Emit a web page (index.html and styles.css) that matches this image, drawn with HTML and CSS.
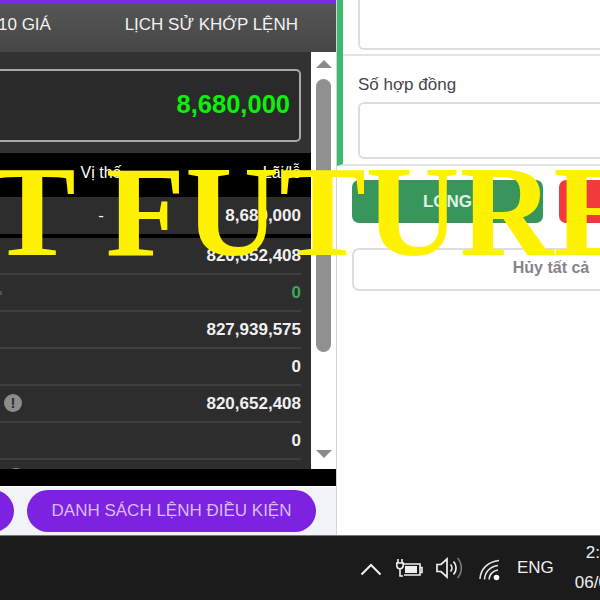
FILE: index.html
```html
<!DOCTYPE html>
<html lang="vi">
<head>
    <meta charset="UTF-8">
    <title>Future</title>
    <link rel="stylesheet" href="styles.css">
</head>
<body>
    <div class="screen">
        <div class="app">
            <!-- Bảng bên trái -->
            <div class="left-panel">
                <div class="tabs">
                    <span class="tab-cut">10 GIÁ</span>
                    <span>LỊCH SỬ KHỚP LỆNH</span>
                </div>

                <div class="table-area">
                    <div class="table-content">
                        <div class="balance-wrap">
                            <div class="balance-box">8,680,000</div>
                        </div>
                        <div class="row row-head"><span class="cell-mid">Vị thế</span><span class="cell-end">Lãi/lỗ</span></div>
                        <div class="row row-first"><span class="cell-mid">-</span><span class="cell-end">8,680,000</span></div>
                        <div class="row"><span class="cell-mid"></span><span class="cell-end">820,652,408</span></div>
                        <div class="row"><span class="cell-mid"><i class="dot"></i></span><span class="cell-end value-green">0</span></div>
                        <div class="row"><span class="cell-mid"></span><span class="cell-end">827,939,575</span></div>
                        <div class="row"><span class="cell-mid"></span><span class="cell-end">0</span></div>
                        <div class="row"><span class="cell-mid"><i class="info">!</i></span><span class="cell-end">820,652,408</span></div>
                        <div class="row"><span class="cell-mid"></span><span class="cell-end">0</span></div>
                        <div class="row"><span class="cell-mid"><i class="info info-low"></i></span><span class="cell-end"></span></div>
                    </div>
                    <div class="scrollbar">
                        <i class="arrow-up"></i>
                        <i class="thumb"></i>
                        <i class="arrow-down"></i>
                    </div>
                </div>

                <div class="black-bar"></div>

                <div class="actions">
                    <div class="pill pill-cut"></div>
                    <div class="pill">DANH SÁCH LỆNH ĐIỀU KIỆN</div>
                </div>
            </div>

            <!-- Form đặt lệnh -->
            <div class="right-panel">
                <div class="form-top">
                    <div class="section section-first">
                        <div class="input input-cut"></div>
                    </div>
                    <div class="section section-second">
                        <label class="label">Số hợp đồng</label>
                        <div class="input"></div>
                    </div>
                </div>
                <div class="buttons">
                    <div class="btn btn-long">LONG</div>
                    <div class="btn btn-short"></div>
                </div>
                <div class="btn-cancel">Hủy tất cả</div>
            </div>
        </div>

        <!-- Thanh tác vụ -->
        <div class="taskbar">
            <svg class="tray-chevron" width="22" height="14" viewBox="0 0 22 14"><path d="M1.5 12.5 11 3l9.500 9.500" fill="none" stroke="#f0f0f0" stroke-width="2"/></svg>
            <svg class="tray-power" width="27" height="20" viewBox="0 0 27 20" fill="none" stroke="#f0f0f0" stroke-width="1.600"><path d="M2 1v4M6 1v4M.8 5h6.400v2.500a3.200 3.200 0 0 1-6.400 0zM4 11v7h3"/><path d="M8 6h16v11H8"/><path d="M24 9.500h2v5h-2"/><path d="M9 8h12v7H9z" fill="#f0f0f0" stroke="none"/></svg>
            <svg class="tray-sound" width="27" height="24" viewBox="0 0 27 24" fill="none" stroke="#f0f0f0" stroke-width="1.700"><path d="M1 8.500h4L11 3v18l-6-5.500H1z"/><path d="M14.500 8.500a5 5 0 0 1 0 7M17.500 5.500a9.500 9.500 0 0 1 0 13"/><path d="M21.500 2a15 15 0 0 1 0 20" stroke="#777"/></svg>
            <svg class="tray-wifi" width="22" height="22" viewBox="0 0 22 22" fill="none" stroke="#e8e8e8" stroke-width="1.500"><path d="M1 20C1.500 10 9 2.500 20 1.500M5.500 20.500C6 13 11 7.500 19 6.500M10 20.500c.5-5 3.500-8.500 9-9.500"/><circle cx="17.500" cy="18.500" r="2.800" fill="#fff" stroke="none"/></svg>
            <span class="tray-lang">ENG</span>
            <div class="clock">
                <span>2:45 PM</span>
                <span>06/08/2021</span>
            </div>
        </div>

        <!-- Chữ vàng đè lên ảnh -->
        <div class="watermark">T FUTURE</div>
    </div>
</body>
</html>
```

FILE: styles.css
```css
* {
    margin: 0;
    padding: 0;
    box-sizing: border-box;
}

html, body {
    height: 100%;
    overflow: hidden;
}

body {
    font-family: "Liberation Sans", Arial, sans-serif;
    background: #fff;
}

.screen {
    position: relative;
    width: 600px;
    height: 600px;
    overflow: hidden;
    display: flex;
    flex-direction: column;
}

.app {
    display: flex;
    height: 535px;
}

/* Bảng bên trái */
.left-panel {
    width: 337px;
    flex: none;
    display: flex;
    flex-direction: column;
    border-right: 1px solid #d5d5d5;
}

.tabs {
    height: 52px;
    flex: none;
    border-top: 3px solid #7b2be0;
    background: linear-gradient(#565656, #464646);
    color: #f2f2f2;
    font-size: 17px;
    display: flex;
    justify-content: space-between;
    align-items: center;
    padding: 0 38px 5px 0;
}

.tab-cut {
    margin-left: -2px;
}

.table-area {
    height: 417px;
    flex: none;
    display: flex;
    background: #fff;
}

.table-content {
    flex: 1;
    overflow: hidden;
    background: #2d2d2d;
}

.balance-wrap {
    height: 101px;
    padding: 17px 10px 0 0;
    background: #323232;
}

.balance-box {
    height: 73px;
    margin-left: -10px;
    border: 2px solid #a8a8a8;
    border-radius: 5px;
    background: #2a2a2a;
    color: #0cf10c;
    font-size: 25.500px;
    font-weight: bold;
    text-align: right;
    line-height: 66px;
    padding-right: 9px;
}

.row {
    display: grid;
    grid-template-columns: 202px 1fr;
    align-items: center;
    height: 37px;
    margin-right: 10px;
    border-bottom: 2px solid #3f3f3f;
    color: #f0f0f0;
    font-size: 17px;
    font-weight: bold;
}

.row-head {
    height: 44px;
    margin-right: 0;
    padding: 0 10px 4px 0;
    border-bottom: none;
    background: #000;
    color: #fff;
    font-size: 16px;
    font-weight: normal;
}

.row-first {
    height: 41px;
    margin-right: 0;
    padding-right: 10px;
    border-bottom: 4px solid #000;
}

.cell-mid {
    position: relative;
    text-align: center;
    font-weight: normal;
    height: 100%;
    display: flex;
    align-items: center;
    justify-content: center;
}

.cell-end {
    text-align: right;
}

.value-green {
    color: #3ea45f;
}

.dot {
    position: absolute;
    left: 0;
    top: 16px;
    width: 2px;
    height: 4px;
    background: #5a4f48;
}

.info {
    position: absolute;
    left: 4px;
    top: 8px;
    width: 18px;
    height: 18px;
    border-radius: 50%;
    background: #8c8c8c;
    color: #2d2d2d;
    font-size: 15px;
    font-weight: bold;
    font-style: normal;
    line-height: 18px;
    text-align: center;
}

.info-low {
    left: 7px;
}

/* Thanh cuộn */
.scrollbar {
    width: 25px;
    flex: none;
    display: flex;
    flex-direction: column;
    align-items: center;
    padding-top: 8px;
    background: #fff;
}

.arrow-up {
    border-left: 8px solid transparent;
    border-right: 8px solid transparent;
    border-bottom: 8px solid #8b8b8b;
}

.thumb {
    width: 15px;
    height: 273px;
    margin: 11px 0 98px;
    border-radius: 8px;
    background: #909090;
}

.arrow-down {
    border-left: 8px solid transparent;
    border-right: 8px solid transparent;
    border-top: 8px solid #8b8b8b;
}

.black-bar {
    height: 17px;
    flex: none;
    background: #000;
}

.actions {
    flex: 1;
    display: flex;
    gap: 13px;
    align-items: center;
    background: #f0f3f7;
    border-top: 1px solid #fff;
    overflow: hidden;
}

.pill {
    flex: none;
    width: 289px;
    height: 42px;
    border-radius: 21px;
    background: #7c22e0;
    color: #d7bdf2;
    font-size: 17px;
    line-height: 42px;
    text-align: center;
}

.pill-cut {
    width: 42px;
    margin-left: -28px;
}

/* Form đặt lệnh */
.right-panel {
    flex: 1;
    min-width: 0;
    overflow: hidden;
}

.form-top {
    height: 166px;
    border-left: 6px solid #3dba6f;
    border-bottom: 2px solid #e4e4e4;
}

.section {
    padding-left: 15px;
}

.section-first {
    height: 56px;
    border-bottom: 2px solid #e4e4e4;
}

.section-second {
    padding-top: 19px;
}

.label {
    display: block;
    height: 27px;
    color: #45454f;
    font-size: 17px;
    line-height: 20px;
}

.input {
    width: 400px;
    height: 57px;
    border: 2px solid #dedede;
    border-radius: 6px;
    background: #fff;
}

.input-cut {
    height: 50px;
    border-top: none;
    border-radius: 0 0 6px 6px;
}

.buttons {
    display: flex;
    gap: 16px;
    padding: 14px 0 0 15px;
}

.btn {
    flex: none;
    width: 191px;
    height: 43px;
    border-radius: 7px;
    color: #dcf3e5;
    font-size: 17px;
    font-weight: bold;
    line-height: 43px;
    text-align: center;
}

.btn-long {
    background: #38965a;
}

.btn-short {
    background: #f23a3c;
}

.btn-cancel {
    width: 398px;
    height: 43px;
    margin: 25px 0 0 15px;
    border: 2px solid #dedede;
    border-radius: 7px;
    color: #85858c;
    font-size: 16px;
    font-weight: bold;
    line-height: 36px;
    text-align: center;
}

/* Thanh tác vụ */
.taskbar {
    flex: 1;
    display: flex;
    align-items: center;
    gap: 14px;
    padding-left: 360px;
    background: #1b1b1b;
    border-top: 1px solid #777;
    color: #f0f0f0;
}

.taskbar svg,
.taskbar span {
    flex: none;
}

.tray-chevron {
    margin-top: 1px;
}

.tray-sound {
    margin-left: -1px;
}

.tray-wifi {
    margin-left: 2px;
    margin-top: 4px;
}

.tray-lang {
    margin-left: 2px;
    font-size: 17px;
}

.clock {
    flex: none;
    width: 85px;
    margin-left: 7px;
    display: flex;
    flex-direction: column;
    align-items: center;
    gap: 10px;
    font-size: 17px;
    white-space: nowrap;
}

/* Chữ vàng */
.watermark {
    position: absolute;
    left: -11px;
    top: 146px;
    color: #fff200;
    font-family: "Liberation Serif", "Times New Roman", serif;
    font-size: 130px;
    font-weight: bold;
    line-height: 1;
    white-space: nowrap;
}
```
